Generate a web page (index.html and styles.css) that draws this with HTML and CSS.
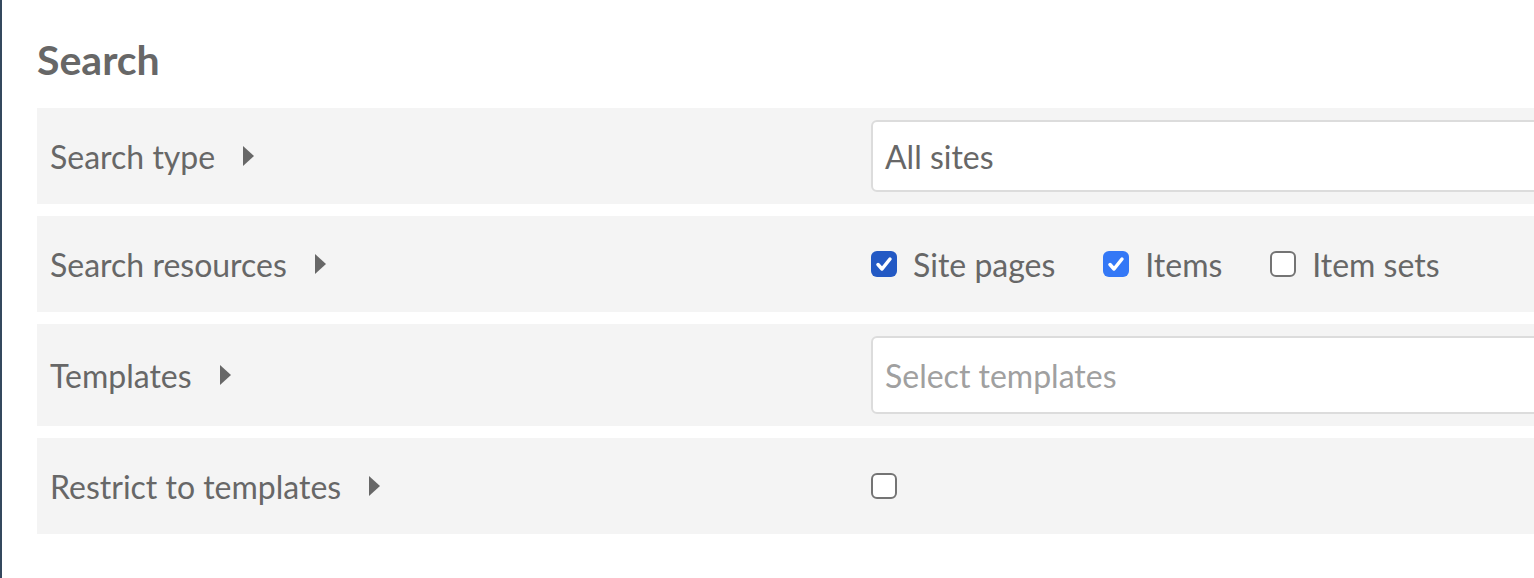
FILE: index.html
```html
<!DOCTYPE html>
<html lang="en">
<head>
    <meta charset="UTF-8">
    <title>Search</title>
    <link rel="stylesheet" href="styles.css">
</head>
<body>

<div class="panel">
    <h2>Search</h2>

    <div class="field">
        <div class="field-label">Search type <span class="caret"></span></div>
        <div class="field-value">
            <div class="text-box">All sites</div>
        </div>
    </div>

    <div class="field">
        <div class="field-label">Search resources <span class="caret"></span></div>
        <div class="field-value checks">
            <label class="check"><span class="box checked dark"><svg viewBox="0 0 26 26"><path d="M7 13.5l4 4.5 8-10"/></svg></span>Site pages</label>
            <label class="check"><span class="box checked"><svg viewBox="0 0 26 26"><path d="M7 13.5l4 4.5 8-10"/></svg></span>Items</label>
            <label class="check"><span class="box"></span>Item sets</label>
        </div>
    </div>

    <div class="field">
        <div class="field-label">Templates <span class="caret"></span></div>
        <div class="field-value">
            <div class="text-box tall placeholder">Select templates</div>
        </div>
    </div>

    <div class="field">
        <div class="field-label">Restrict to templates <span class="caret"></span></div>
        <div class="field-value checks">
            <span class="box"></span>
        </div>
    </div>
</div>

</body>
</html>
```

FILE: styles.css
```css
html {
    background-color: white;
    font-family: Lato, "Open Sans", sans-serif;
}
body {
    margin: 0;
    border-left: 2px solid #34485e;
    min-height: 578px;
    box-sizing: border-box;
    overflow: hidden;
}
.panel {
    padding: 34px 0 0 35px;
    color: #676767;
}
h2 {
    margin: 0 0 22px;
    font-size: 41px;
    font-weight: bold;
    line-height: 52px;
}
.field {
    display: flex;
    align-items: center;
    background-color: #f4f4f4;
    margin-bottom: 12px;
    width: 1600px;
    min-height: 96px;
}
.field-label {
    width: 821px;
    padding-left: 13px;
    font-size: 32px;
    display: flex;
    align-items: center;
}
.caret {
    margin-left: 28px;
    width: 0;
    height: 0;
    border-top: 10px solid transparent;
    border-bottom: 10px solid transparent;
    border-left: 11px solid #676767;
}
.field-value {
    flex: 1;
    padding: 12px 0;
}
.text-box {
    background-color: white;
    border: 2px solid #dcdcdc;
    border-radius: 6px;
    box-sizing: border-box;
    height: 72px;
    padding: 0 12px;
    font-size: 32px;
    display: flex;
    align-items: center;
}
.text-box.tall {
    height: 78px;
}
.placeholder {
    color: #a0a0a0;
}
.checks {
    display: flex;
    align-items: center;
    font-size: 32px;
}
.check {
    display: flex;
    align-items: center;
    margin-right: 48px;
}
.box {
    width: 26px;
    height: 26px;
    box-sizing: border-box;
    border: 2.5px solid #747474;
    border-radius: 6px;
    background-color: white;
    margin-right: 16px;
    display: inline-block;
}
.box.checked {
    border: none;
    background-color: #3478f6;
}
.box.dark {
    background-color: #2359c4;
}
.box svg {
    width: 26px;
    height: 26px;
    display: block;
    fill: none;
    stroke: white;
    stroke-width: 3.5;
    stroke-linecap: round;
    stroke-linejoin: round;
}
```
